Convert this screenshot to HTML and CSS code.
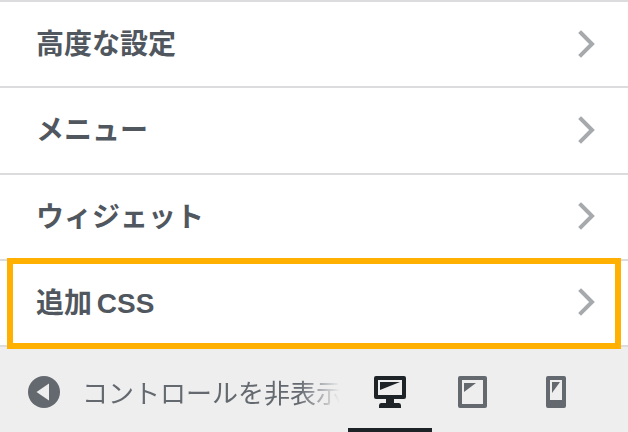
FILE: index.html
```html
<!DOCTYPE html>
<html lang="ja">
<head>
  <meta charset="utf-8">
  <title>カスタマイザー</title>
  <link rel="stylesheet" href="styles.css">
</head>
<body>
  <div class="corner"></div>
  <ul class="menu">
    <li class="menu-row">
      <span class="menu-title">高度な設定</span>
      <svg class="chevron" viewBox="0 0 18 28"><path d="M3 3 L14 14 L3 25"/></svg>
    </li>
    <li class="menu-row">
      <span class="menu-title">メニュー</span>
      <svg class="chevron" viewBox="0 0 18 28"><path d="M3 3 L14 14 L3 25"/></svg>
    </li>
    <li class="menu-row">
      <span class="menu-title">ウィジェット</span>
      <svg class="chevron" viewBox="0 0 18 28"><path d="M3 3 L14 14 L3 25"/></svg>
    </li>
    <li class="menu-row highlighted">
      <span class="menu-title">追加 CSS</span>
      <svg class="chevron" viewBox="0 0 18 28"><path d="M3 3 L14 14 L3 25"/></svg>
    </li>
  </ul>
  <footer class="footer">
    <div class="collapse">
      <svg class="collapse-icon" viewBox="0 0 32 32">
        <circle cx="16" cy="16" r="16" fill="#646970"/>
        <path d="M21 7.500 V24.500 L8.500 16 Z" fill="#eeeeee"/>
      </svg>
      <span class="collapse-label">コントロールを非表示</span>
    </div>
    <div class="devices">
      <button class="device active">
        <svg width="32" height="32" viewBox="0 0 32 32">
          <path fill-rule="evenodd" d="M2 0 H30 Q32 0 32 2 V21 Q32 23 30 23 H20 V27 H25 Q27 27 27 29.500 V32 H5 V29.500 Q5 27 7 27 H12 V23 H2 Q0 23 0 21 V2 Q0 0 2 0 Z M4 4 V19 H28 V4 Z"/>
          <path d="M6 6 H26 L6 14 Z"/>
        </svg>
      </button>
      <button class="device tablet">
        <svg width="29" height="32" viewBox="0 0 29 32">
          <path fill-rule="evenodd" d="M2 0 H27 Q29 0 29 2 V30 Q29 32 27 32 H2 Q0 32 0 30 V2 Q0 0 2 0 Z M4 4 V28 H25 V4 Z"/>
          <path d="M6 7 H18 L6 16 Z"/>
        </svg>
      </button>
      <button class="device phone">
        <svg width="20" height="32" viewBox="0 0 20 32">
          <path fill-rule="evenodd" d="M2 0 H18 Q20 0 20 2 V30 Q20 32 18 32 H2 Q0 32 0 30 V2 Q0 0 2 0 Z M4 4 V24 H16 V4 Z"/>
          <path d="M6 6 H14 L6 17 Z"/>
        </svg>
      </button>
    </div>
  </footer>
</body>
</html>
```

FILE: styles.css
```css
html, body {
  margin: 0;
  padding: 0;
}
body {
  position: relative;
  width: 628px;
  height: 432px;
  overflow: hidden;
  background: #fff;
  font-family: "Liberation Sans", "Noto Sans CJK JP", sans-serif;
}
.corner {
  position: absolute;
  left: 0;
  top: 0;
  width: 6px;
  height: 2px;
  background: #2271b1;
}
.menu {
  list-style: none;
  margin: 0;
  padding: 0;
  height: 345px;
}
.menu-row {
  position: relative;
  display: flex;
  align-items: center;
  justify-content: space-between;
  box-sizing: border-box;
  height: 86.250px;
  padding: 0 32px 0 36px;
  background: #fff;
  border-top: 2px solid #dcdcde;
}
.menu-title {
  padding-bottom: 4px;
  font-size: 28px;
  font-weight: 700;
  word-spacing: -3px;
  color: #50575e;
}
.chevron {
  width: 18px;
  height: 28px;
  margin-top: -1px;
  fill: none;
  stroke: #a7aaad;
  stroke-width: 4px;
  stroke-linecap: square;
}
.highlighted::after {
  content: "";
  position: absolute;
  left: 7px;
  right: 7px;
  top: -3px;
  bottom: -4px;
  border: 6px solid #ffb000;
}
.footer {
  display: flex;
  align-items: center;
  justify-content: space-between;
  box-sizing: border-box;
  height: 87px;
  background: #eeeeee;
  border-top: 2px solid #dcdcde;
}
.collapse {
  display: flex;
  align-items: center;
  gap: 22px;
  width: 340px;
  padding: 5px 0 0 28px;
  box-sizing: border-box;
  overflow: hidden;
  white-space: nowrap;
  -webkit-mask-image: linear-gradient(to right, #000 88%, transparent 100%);
  mask-image: linear-gradient(to right, #000 88%, transparent 100%);
}
.collapse-icon {
  flex: none;
  width: 32px;
  height: 32px;
}
.collapse-label {
  padding-bottom: 2px;
  font-size: 26px;
  color: #646970;
}
.devices {
  display: flex;
  height: 100%;
  margin-right: 29px;
}
.device {
  display: flex;
  align-items: center;
  justify-content: center;
  width: 84px;
  height: 100%;
  padding: 9px 0 0;
  border: none;
  border-bottom: 4px solid transparent;
  background: none;
  fill: #646970;
}
.device.tablet {
  width: 81px;
}
.device.phone {
  width: 86px;
}
.device.active {
  fill: #1d2327;
  border-bottom-color: #1d2327;
}
```
